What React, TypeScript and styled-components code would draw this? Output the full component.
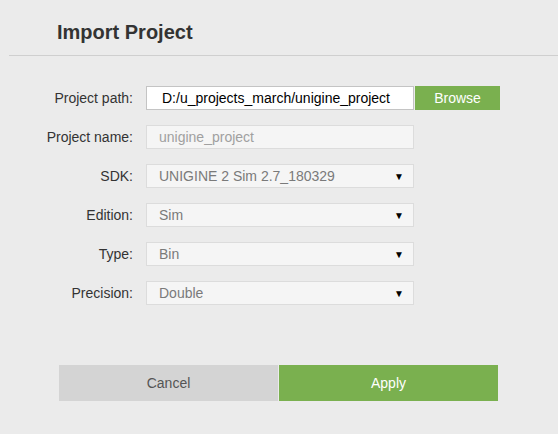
import React from 'react';
import styled, { createGlobalStyle } from 'styled-components';

const GlobalStyle = createGlobalStyle`
  html, body {
    margin: 0;
    padding: 0;
    background: #ebebeb;
  }
  body {
    font-family: "Liberation Sans", Arial, sans-serif;
    color: #333;
  }
`;

const green = '#7ab04f';

const Page = styled.div`
  width: 558px;
  height: 434px;
  background: #ebebeb;
  overflow: hidden;
`;

const Header = styled.div`
  margin-left: 9px;
  height: 56px;
  box-sizing: border-box;
  padding: 21px 0 0 48px;
  border-bottom: 1px solid #cfcfcf;
`;

const Title = styled.h1`
  margin: 0;
  font-size: 20px;
  font-weight: bold;
  color: #333;
  line-height: 23px;
`;

const Form = styled.div`
  display: flex;
  flex-direction: column;
  gap: 15px;
  padding-top: 30px;
`;

const Row = styled.div`
  display: grid;
  grid-template-columns: 133px 268px auto;
  column-gap: 13px;
  align-items: center;
  height: 24px;
`;

const Label = styled.label`
  text-align: right;
  font-size: 14px;
  color: #333;
`;

const Field = styled.div<{ $editable?: boolean; $muted?: boolean }>`
  box-sizing: border-box;
  height: 24px;
  display: flex;
  align-items: center;
  justify-content: space-between;
  padding: 0 ${(p) => (p.$editable ? '0 0 15px' : '8px 0 12px')};
  font-size: 14px;
  background: ${(p) => (p.$editable ? '#fff' : '#f5f5f5')};
  border: 1px solid ${(p) => (p.$editable ? '#c4c4c4' : '#dcdcdc')};
  color: ${(p) => (p.$editable ? '#000' : p.$muted ? '#a0a0a0' : '#7a7a7a')};
  white-space: nowrap;
`;

const Arrow = styled.span`
  font-size: 10px;
  color: #000;
  margin-right: 1px;
`;

const BrowseButton = styled.button`
  margin-left: -12px;
  width: 85px;
  height: 24px;
  border: none;
  background: ${green};
  color: #fff;
  font-family: inherit;
  font-size: 14px;
  padding: 0;
`;

const Actions = styled.div`
  display: flex;
  gap: 1px;
  margin: 60px 0 0 59px;
`;

const ActionButton = styled.button<{ $primary?: boolean }>`
  width: 219px;
  height: 36px;
  border: none;
  padding: 0;
  font-family: inherit;
  font-size: 14px;
  background: ${(p) => (p.$primary ? green : '#d4d4d4')};
  color: ${(p) => (p.$primary ? '#fff' : '#555')};
`;

const selects = [
  { label: 'SDK:', value: 'UNIGINE 2 Sim 2.7_180329' },
  { label: 'Edition:', value: 'Sim' },
  { label: 'Type:', value: 'Bin' },
  { label: 'Precision:', value: 'Double' },
];

export default function App() {
  return (
    <Page>
      <GlobalStyle />
      <Header>
        <Title>Import Project</Title>
      </Header>
      <Form>
        <Row>
          <Label>Project path:</Label>
          <Field $editable>D:/u_projects_march/unigine_project</Field>
          <BrowseButton>Browse</BrowseButton>
        </Row>
        <Row>
          <Label>Project name:</Label>
          <Field $muted>unigine_project</Field>
        </Row>
        {selects.map((s) => (
          <Row key={s.label}>
            <Label>{s.label}</Label>
            <Field>
              <span>{s.value}</span>
              <Arrow>▼</Arrow>
            </Field>
          </Row>
        ))}
      </Form>
      <Actions>
        <ActionButton>Cancel</ActionButton>
        <ActionButton $primary>Apply</ActionButton>
      </Actions>
    </Page>
  );
}
